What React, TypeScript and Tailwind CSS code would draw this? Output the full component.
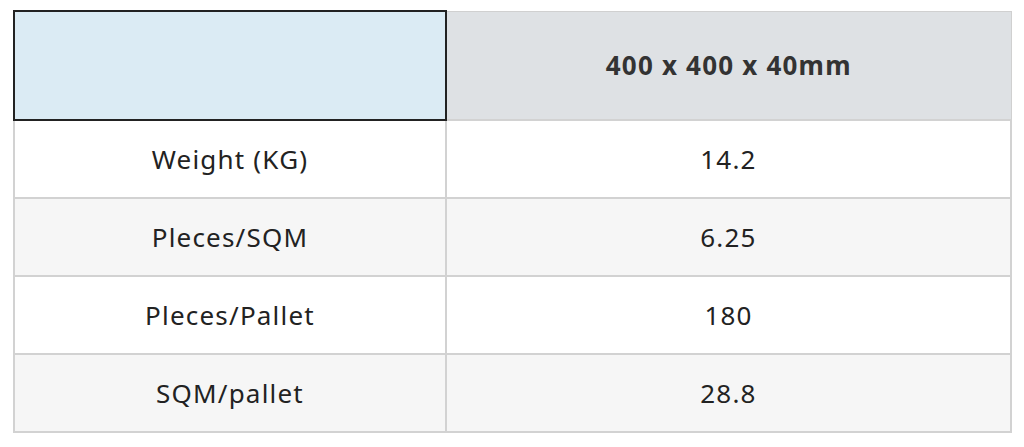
const rows = [
  { label: "Weight (KG)", value: "14.2" },
  { label: "Pleces/SQM", value: "6.25" },
  { label: "Pleces/Pallet", value: "180" },
  { label: "SQM/pallet", value: "28.8" },
];

export default function App() {
  return (
    <div className="h-[447px] w-[1024px] bg-white pl-[13px] pt-[10px] font-['Noto_Sans',sans-serif]">
      <table className="w-[999px] table-fixed border-collapse text-center text-[26px] tracking-[1.2px]">
        <colgroup>
          <col className="w-[432px]" />
          <col />
        </colgroup>
        <thead>
          <tr className="h-[109px]">
            {/* selected corner cell */}
            <th className="border-2 border-[#222] bg-[#dbebf4]" />
            <th className="border border-[#d0d0d0] bg-[#dee1e4] font-bold text-[#333]">
              400 x 400 x 40mm
            </th>
          </tr>
        </thead>
        <tbody>
          {rows.map((r, i) => (
            <tr
              key={r.label}
              className={`h-[78px] ${i % 2 === 1 ? "bg-[#f6f6f6]" : "bg-white"}`}
            >
              <td className="border-2 border-[#d2d2d2] text-[#222]">{r.label}</td>
              <td className="border-2 border-[#d2d2d2] text-[#222]">{r.value}</td>
            </tr>
          ))}
        </tbody>
      </table>
    </div>
  );
}
